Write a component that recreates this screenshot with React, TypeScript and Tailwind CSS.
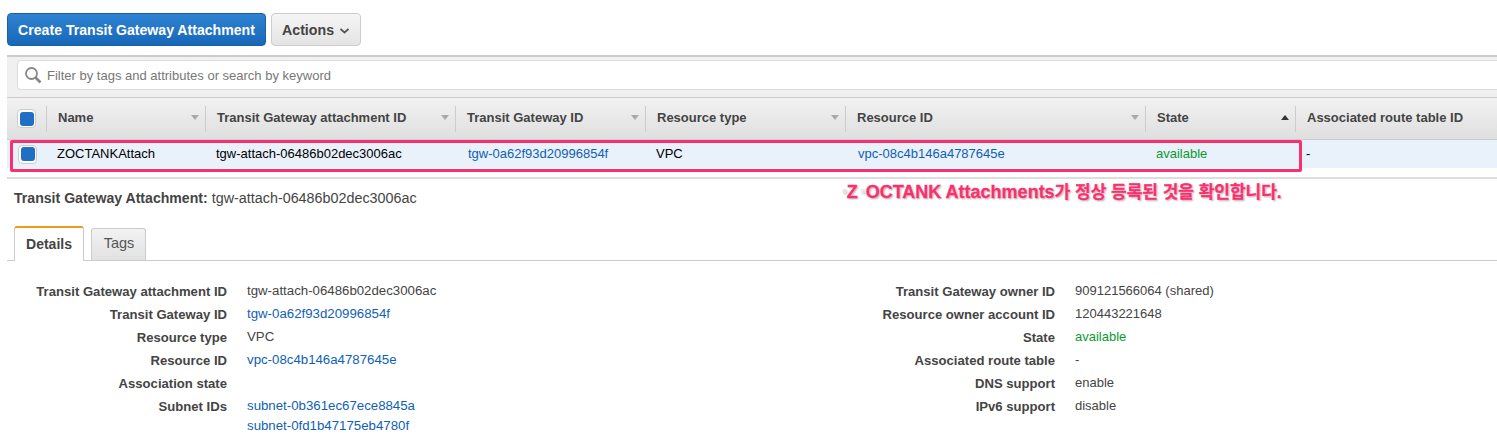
const columns = [
  { label: "Name", width: "w-[159px]" },
  { label: "Transit Gateway attachment ID", width: "w-[250px]" },
  { label: "Transit Gateway ID", width: "w-[190px]" },
  { label: "Resource type", width: "w-[200px]" },
  { label: "Resource ID", width: "w-[300px]" },
];

const leftDetails = [
  { label: "Transit Gateway attachment ID", value: "tgw-attach-06486b02dec3006ac" },
  { label: "Transit Gateway ID", value: "tgw-0a62f93d20996854f", link: true },
  { label: "Resource type", value: "VPC" },
  { label: "Resource ID", value: "vpc-08c4b146a4787645e", link: true },
  { label: "Association state", value: "" },
  { label: "Subnet IDs", value: "subnet-0b361ec67ece8845a", link: true },
];

const rightDetails = [
  { label: "Transit Gateway owner ID", value: "909121566064 (shared)" },
  { label: "Resource owner account ID", value: "120443221648" },
  { label: "State", value: "available", green: true },
  { label: "Associated route table", value: "-" },
  { label: "DNS support", value: "enable" },
  { label: "IPv6 support", value: "disable" },
];

function Checkbox() {
  return (
    <span className="flex h-[19px] w-[19px] items-center justify-center rounded-[4px] border border-[#ccc] bg-white">
      <span className="h-[14px] w-[14px] rounded-[3px] bg-[#1f6fc4]" />
    </span>
  );
}

function SortArrow() {
  return <span className="h-0 w-0 border-x-[4px] border-t-[5px] border-x-transparent border-t-[#aaa]" />;
}

type Detail = { label: string; value: string; link?: boolean; green?: boolean };

function DetailRow({ item, labelWidth, valueSize }: { item: Detail; labelWidth: string; valueSize: string }) {
  const color = item.link ? "text-[#0f5fb5]" : item.green ? "text-[#0a9a2e]" : "text-[#444]";
  return (
    <div className="flex h-[23px] items-center">
      <div className={`${labelWidth} text-right text-[13.1px] font-bold text-[#444]`}>{item.label}</div>
      <div className={`ml-5 -mt-[2px] ${valueSize} ${color}`}>{item.value}</div>
    </div>
  );
}

export default function App() {
  return (
    <div className="relative h-[447px] w-[1497px] overflow-hidden bg-white font-['Liberation_Sans','Noto_Sans_CJK_KR',sans-serif]">
      {/* top buttons */}
      <div className="flex gap-[5px] pl-[7px] pt-[13px]">
        <button className="h-[33px] w-[259px] rounded-[4px] border border-[#1a5fa8] bg-gradient-to-b from-[#2f83d2] to-[#1767b8] pt-[2px] text-[14.1px] font-bold text-white">
          Create Transit Gateway Attachment
        </button>
        <button className="flex h-[33px] w-[90px] items-center gap-[6px] rounded-[4px] border border-[#ccc] bg-gradient-to-b from-[#f5f5f5] to-[#e4e4e4] pl-[10px] pt-[2px] text-[14.2px] font-bold text-[#444]">
          Actions
          <svg width="9" height="6" viewBox="0 0 9 6" fill="none" stroke="#555" strokeWidth="1.7">
            <path d="M0.5 1 L4.5 4.5 L8.5 1" />
          </svg>
        </button>
      </div>

      {/* filter bar */}
      <div className="ml-[7px] mt-[9px] h-[42px] border-t-2 border-[#ccc] bg-[#f0f0f0] pl-[10px] pt-[3px]">
        <div className="flex h-[30px] items-center gap-[5px] rounded-l-[4px] border border-r-0 border-[#ddd] bg-white pl-[6px]">
          <svg width="18" height="18" viewBox="0 0 18 18" fill="none" stroke="#888" strokeWidth="1.8">
            <circle cx="7.5" cy="7.5" r="5.5" />
            <path d="M11.5 11.5 L16.5 16.5" strokeWidth="2.6" />
          </svg>
          <span className="pt-[1px] text-[13px] text-[#777]">Filter by tags and attributes or search by keyword</span>
        </div>
      </div>

      {/* table header */}
      <div className="ml-[7px] flex h-[43px] items-center border-y border-[#ccc] bg-gradient-to-b from-[#f2f2f2] to-[#dfdfdf]">
        <div className="flex w-[39px] justify-center">
          <Checkbox />
        </div>
        {columns.map((col) => (
          <div key={col.label} className={`flex h-[26px] items-center justify-between border-l border-[#ccc] pb-[2px] pl-[11px] pr-[6px] ${col.width}`}>
            <span className="text-[13px] font-bold text-[#444]">{col.label}</span>
            <SortArrow />
          </div>
        ))}
        <div className="flex h-[26px] w-[150px] items-center justify-between border-l border-[#ccc] pb-[2px] pl-[11px] pr-[6px]">
          <span className="text-[13px] font-bold text-[#444]">State</span>
          <span className="h-0 w-0 border-x-[4px] border-b-[5px] border-x-transparent border-b-[#333]" />
        </div>
        <div className="flex h-[26px] flex-1 items-center border-l border-[#ccc] pb-[2px] pl-[11px]">
          <span className="text-[13px] font-bold text-[#444]">Associated route table ID</span>
        </div>
      </div>

      {/* selected row */}
      <div className="ml-[7px] flex h-[28px] items-center bg-[#e9f1fb] text-[13px] text-black">
        <div className="flex w-[39px] justify-center pl-[2px]">
          <Checkbox />
        </div>
        <div className="w-[160px] pl-[11px]">ZOCTANKAttach</div>
        <div className="w-[250px] pl-[10px]">tgw-attach-06486b02dec3006ac</div>
        <div className="w-[190px] pl-[12px] text-[#0f5fb5]">tgw-0a62f93d20996854f</div>
        <div className="w-[200px] pl-[10px]">VPC</div>
        <div className="w-[300px] pl-[12px] text-[#0f5fb5]">vpc-08c4b146a4787645e</div>
        <div className="w-[150px] pl-[10px] text-[#0a9a2e]">available</div>
        <div className="pl-[10px]">-</div>
      </div>

      <div className="ml-[7px] mt-[9px] border-t-2 border-[#ddd] pl-[7px] pt-[9px] text-[14.35px] text-[#444]">
        <span className="text-[14.1px] font-bold">Transit Gateway Attachment:</span> tgw-attach-06486b02dec3006ac
      </div>

      {/* tabs */}
      <div className="ml-[7px] mt-[17px] flex h-[34px] items-end gap-[7px] border-b border-[#ccc] pl-[7px]">
        <div className="-mb-[1px] flex h-[35px] w-[70px] items-center justify-center rounded-t-[3px] border-x border-t-2 border-x-[#ccc] border-t-[#f09a1a] bg-white text-[14px] font-bold text-[#444]">
          Details
        </div>
        <div className="flex h-[32px] w-[55px] items-center justify-center rounded-t-[3px] border-x border-t border-[#ccc] bg-gradient-to-b from-[#f2f2f2] to-[#e2e2e2] pl-[1px] text-[14.5px] text-[#555]">
          Tags
        </div>
      </div>

      {/* details */}
      <div className="flex pt-[20px]">
        <div className="w-[861px]">
          {leftDetails.map((item) => (
            <DetailRow key={item.label} item={item} labelWidth="w-[227px]" valueSize="text-[13.25px]" />
          ))}
          <div className="ml-[247px] -mt-[3px] text-[13.25px] text-[#0f5fb5]">subnet-0fd1b47175eb4780f</div>
        </div>
        <div>
          {rightDetails.map((item) => (
            <DetailRow key={item.label} item={item} labelWidth="w-[194px]" valueSize="text-[13px]" />
          ))}
        </div>
      </div>

      {/* annotation overlay */}
      <div className="absolute left-[842px] top-[179px] whitespace-nowrap font-bold text-[#f9306f] [-webkit-text-stroke:0.3px_#f9306f] [text-shadow:0_0_2px_#fff,1px_1px_2px_#999]">
        <span className="text-[18px]">
          <span className="text-[12px] text-[#e4e4e4] [-webkit-text-stroke:0]">°</span>Z <span className="-ml-[2px] text-[12px] text-[#e4e4e4] [-webkit-text-stroke:0]">°</span>OCTANK Attachments
        </span>
        <span className="text-[17px]">가 정상 등록된 것을 확인합니다.</span>
      </div>
      <div className="absolute left-[10px] top-[140px] h-[32px] w-[1292px] rounded-[2px] border-[3px] border-[#f9306f]" />
    </div>
  );
}
